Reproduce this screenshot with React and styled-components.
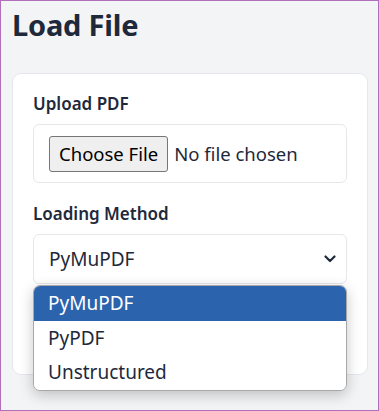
import React from 'react';
import styled, { createGlobalStyle } from 'styled-components';

const GlobalStyle = createGlobalStyle`
  html, body {
    margin: 0;
    padding: 0;
    background: #ffffff;
  }
  body {
    font-family: "Noto Sans", "Open Sans", sans-serif;
    color: #1e293b;
  }
`;

const Frame = styled.div`
  box-sizing: border-box;
  width: 379px;
  height: 411px;
  border: 1px solid #b16fbb;
  background: #f3f4f6;
  padding: 0 10px 0 11px;
  overflow: hidden;
`;

const Title = styled.h1`
  margin: 0;
  padding-top: 4px;
  font-size: 29px;
  line-height: 40px;
  font-weight: 700;
  color: #1e293b;
  letter-spacing: -0.2px;
`;

const Card = styled.div`
  margin-top: 28px;
  background: #ffffff;
  border: 1px solid #e5e7eb;
  border-radius: 9px;
  padding: 18px 20px 23px;
  display: flex;
  flex-direction: column;
  gap: 19px;
  position: relative;
`;

const Field = styled.div`
  display: flex;
  flex-direction: column;
  gap: 8px;
`;

const Label = styled.label`
  font-size: 17px;
  line-height: 24px;
  font-weight: 600;
  color: #1e293b;
`;

const FileBox = styled.div`
  box-sizing: border-box;
  height: 59px;
  border: 1px solid #e5e7eb;
  border-radius: 6px;
  display: flex;
  align-items: center;
  padding: 0 15px;
  gap: 6px;
  font-size: 18.5px;
`;

const FileButton = styled.span`
  box-sizing: border-box;
  height: 36px;
  padding: 0 9px;
  display: flex;
  align-items: center;
  background: #efefef;
  border: 1px solid #767676;
  border-radius: 3px;
  color: #000000;
`;

const FileName = styled.span`
  color: #1e293b;
`;

const SelectBox = styled.div`
  box-sizing: border-box;
  height: 50px;
  border: 1px solid #e5e7eb;
  border-radius: 6px;
  display: flex;
  align-items: center;
  justify-content: space-between;
  padding: 0 10px 0 15px;
  font-size: 19px;
  position: relative;
`;

const SubmitButton = styled.div`
  height: 48px;
  border-radius: 6px;
  background: #2b63ad;
`;

const Menu = styled.ul`
  list-style: none;
  margin: 0;
  padding: 0;
  position: absolute;
  top: 50px;
  left: -1px;
  right: -1px;
  background: #ffffff;
  border: 1px solid #a8a8a8;
  border-radius: 7px;
  overflow: hidden;
  box-shadow: 0 4px 14px rgba(0, 0, 0, 0.22);
  z-index: 2;
`;

const MenuItem = styled.li`
  height: 34.5px;
  display: flex;
  align-items: center;
  padding: 0 14px;
  font-size: 19px;
  background: ${p => (p.$active ? '#2b63ad' : '#ffffff')};
  color: ${p => (p.$active ? '#ffffff' : '#1e293b')};
`;

const methods = ['PyMuPDF', 'PyPDF', 'Unstructured'];

const Chevron = () => (
  <svg width="12" height="8" viewBox="0 0 12 8" fill="none">
    <path d="M1.5 1.5 L6 6 L10.5 1.5" stroke="#1e293b" strokeWidth="2.2" strokeLinecap="round" strokeLinejoin="round" />
  </svg>
);

export default function App() {
  return (
    <>
      <GlobalStyle />
      <Frame>
        <Title>Load File</Title>
        <Card>
          <Field>
            <Label>Upload PDF</Label>
            <FileBox>
              <FileButton>Choose File</FileButton>
              <FileName>No file chosen</FileName>
            </FileBox>
          </Field>
          <Field>
            <Label>Loading Method</Label>
            <SelectBox>
              <span>PyMuPDF</span>
              <Chevron />
              <Menu>
                {methods.map(m => (
                  <MenuItem key={m} $active={m === 'PyMuPDF'}>
                    {m}
                  </MenuItem>
                ))}
              </Menu>
            </SelectBox>
          </Field>
          <SubmitButton />
        </Card>
      </Frame>
    </>
  );
}
